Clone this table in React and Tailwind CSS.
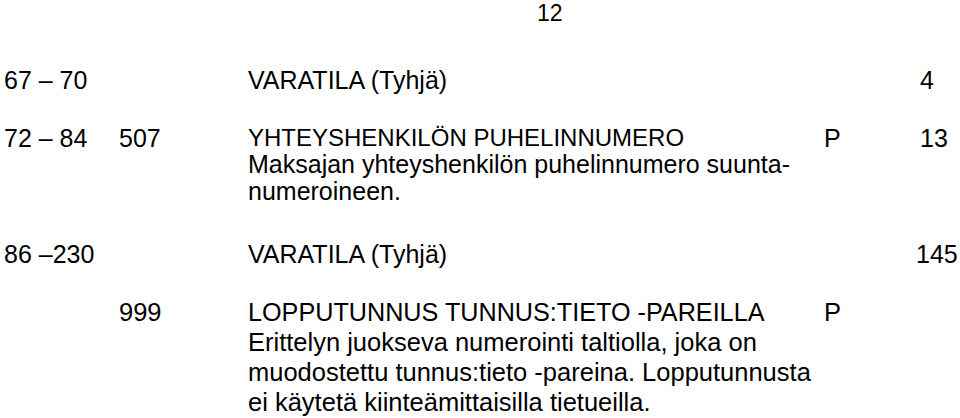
import React from "react";

const font = { fontFamily: '"Liberation Sans", Arial, sans-serif' };

function Row({ a, b, title, lines = [], p, n, nClass = "", size, titleSize = "", className = "" }) {
  return (
    <div className={`flex ${size} text-black whitespace-nowrap ${className}`}>
      <div className="w-[119px] shrink-0 pl-[4px]">{a}</div>
      <div className="w-[129px] shrink-0">{b}</div>
      <div className="w-[576px] shrink-0">
        <div className={titleSize}>{title}</div>
        {lines.map((l) => (
          <div key={l}>{l}</div>
        ))}
      </div>
      <div className="w-[96px] shrink-0">{p}</div>
      <div className={`flex-1 ${nClass}`}>{n}</div>
    </div>
  );
}

export default function App() {
  return (
    <div className="w-[960px] h-[418px] overflow-hidden bg-white" style={font}>
      <div className="pl-[537px] text-[23px] leading-[26px]">12</div>

      <Row
        className="mt-[41px]"
        size="text-[25px] leading-[26.5px]"
        a="67 – 70"
        title="VARATILA (Tyhjä)"
        n="4"
      />

      <Row
        className="mt-[31px]"
        size="text-[25px] leading-[26.5px]"
        titleSize="text-[24px]"
        a="72 – 84"
        b="507"
        title="YHTEYSHENKILÖN PUHELINNUMERO"
        lines={["Maksajan yhteyshenkilön puhelinnumero suunta-", "numeroineen."]}
        p="P"
        n="13"
      />

      <Row
        className="mt-[35px]"
        size="text-[25px] leading-[30px]"
        a="86 –230"
        title="VARATILA (Tyhjä)"
        n="145"
        nClass="-ml-[4px]"
      />

      <Row
        className="mt-[28px]"
        size="text-[25.5px] leading-[30px]"
        titleSize="text-[25.2px]"
        b="999"
        title="LOPPUTUNNUS TUNNUS:TIETO -PAREILLA"
        lines={[
          "Erittelyn juokseva numerointi taltiolla, joka on",
          "muodostettu tunnus:tieto -pareina. Lopputunnusta",
          "ei käytetä kiinteämittaisilla tietueilla.",
        ]}
        p="P"
      />
    </div>
  );
}
